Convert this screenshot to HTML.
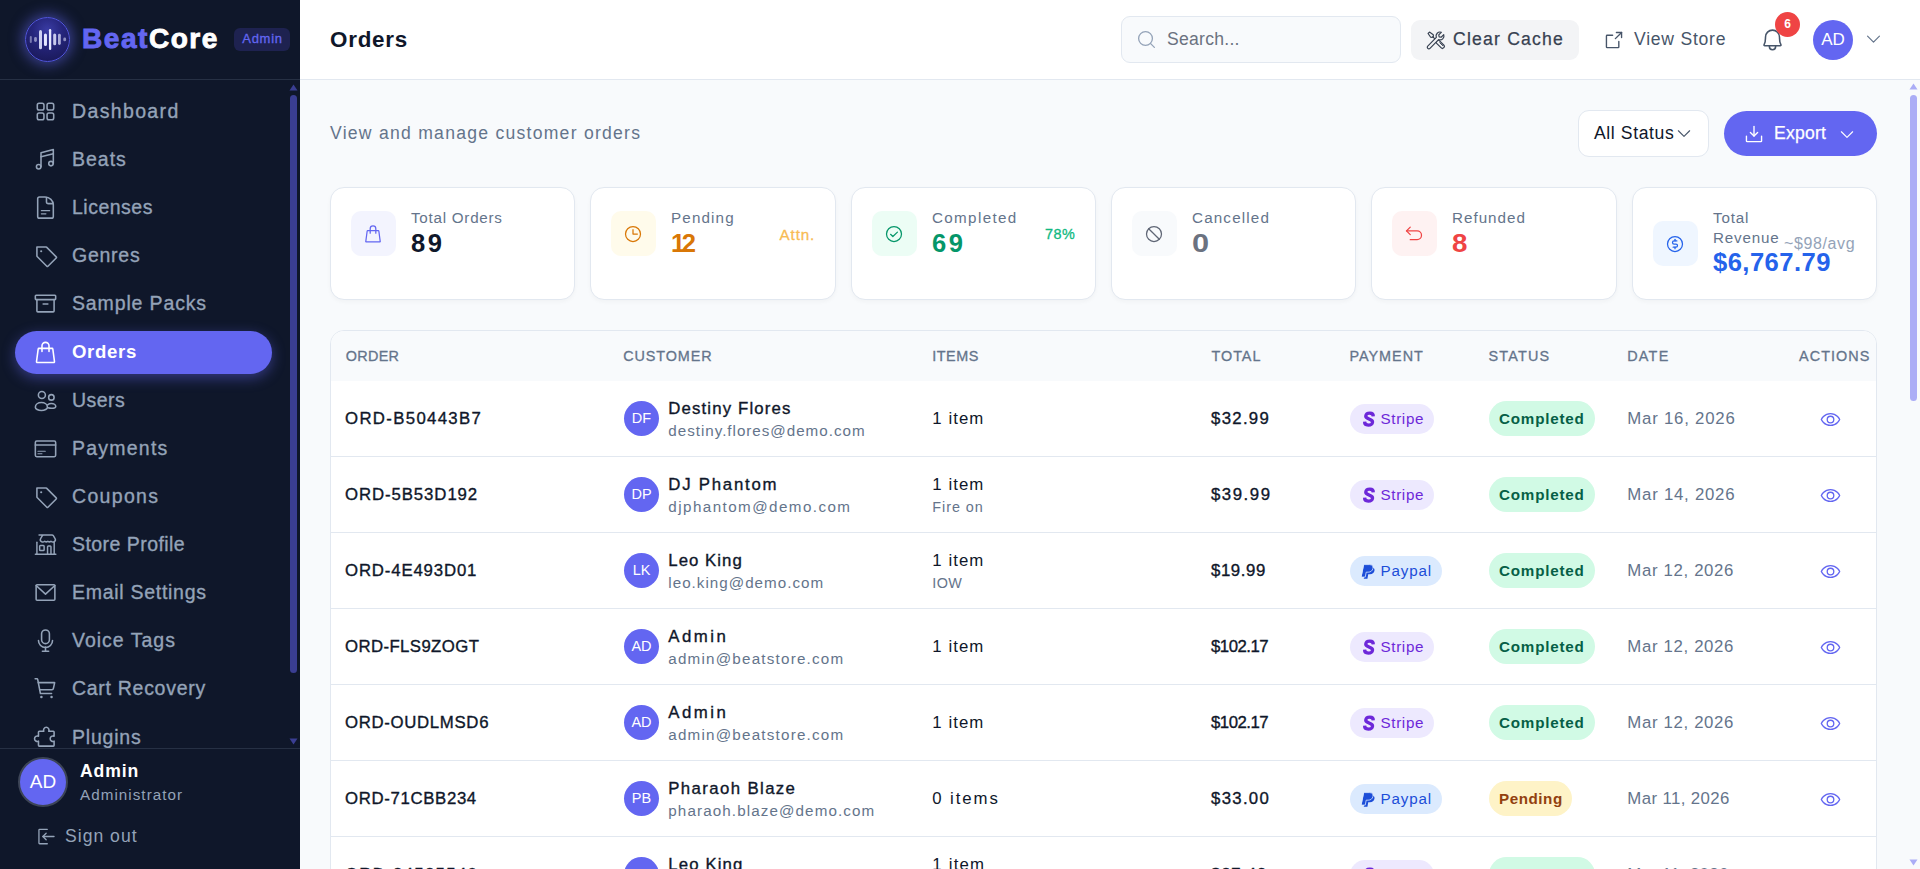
<!DOCTYPE html>
<html lang="en">
<head>
<meta charset="utf-8">
<title>Orders - BeatCore Admin</title>
<style>
*{box-sizing:border-box;margin:0;padding:0}
html,body{width:1920px;height:869px;overflow:hidden;background:#f8fafc}
body{font-family:"Liberation Sans",sans-serif;color:#0f172a;position:relative}
svg.i{display:block;fill:none;stroke:currentColor;stroke-width:16;stroke-linecap:round;stroke-linejoin:round}
.abs{position:absolute}
.t{position:absolute;white-space:nowrap;line-height:1}
.med{-webkit-text-stroke:0.25px currentColor}

/* ---------- sidebar ---------- */
#sb{position:absolute;left:0;top:0;width:300px;height:869px;background:#0f172a;overflow:hidden}
#sb .hd{position:absolute;left:0;top:0;width:300px;height:80px;border-bottom:1px solid #263044}
#logo{position:absolute;left:25px;top:17px;width:45px;height:45px;border-radius:50%;border:1px solid #5256de;background:radial-gradient(circle at 50% 28%,#3a3ca4 0%,#25257c 40%,#17164f 100%);box-shadow:0 0 13px 3px rgba(99,102,241,.5)}
#brand{left:82px;top:25px;font-size:28px;font-weight:700;letter-spacing:1.55px;-webkit-text-stroke:.9px currentColor;color:#6366f1}
#brand b{color:#fff;font-weight:700}
#adm{position:absolute;left:234px;top:28px;width:56px;height:23px;border-radius:6px;background:#1e2250;color:#6366f1;font-size:13px;text-align:center;line-height:22px;letter-spacing:.7px;-webkit-text-stroke:.3px currentColor;padding-left:1px}
.nav{position:absolute;left:15px;width:257px;height:43px;border-radius:22px;color:#94a3b8}
.nav svg{position:absolute;left:18px;top:9px;width:25px;height:25px}
.nav span{position:absolute;left:57px;top:12px;font-size:19.5px;line-height:1;white-space:nowrap;letter-spacing:.9px;-webkit-text-stroke:.35px currentColor}
.nav.on{background:#6366f1;color:#fff;box-shadow:0 4px 14px rgba(99,102,241,.45)}
.nav.on{margin-top:1px}.nav.on svg{top:9px}.nav.on span{top:12px;font-size:18.600px;font-weight:700;letter-spacing:.65px;-webkit-text-stroke:0}
#sbt{position:absolute;left:290px;top:95px;width:7px;height:578px;border-radius:4px;background:#3a3e92}
#sbf{position:absolute;left:0;top:748px;width:300px;height:121px;background:#0f172a;border-top:1px solid #263044}
#sbav{position:absolute;left:18px;top:8px;width:50px;height:50px;border-radius:50%;background:#6366f1;border:2px solid #3d4557;color:#fff;font-size:19px;text-align:center;line-height:46px}

/* ---------- topbar ---------- */
#tb{position:absolute;left:300px;top:0;width:1620px;height:80px;background:#fff;border-bottom:1px solid #e2e8f0}
#search{position:absolute;left:821px;top:16px;width:280px;height:47px;border:1px solid #e2e8f0;border-radius:9px;background:#f8fafc}
#cc{position:absolute;left:1111px;top:20px;width:168px;height:40px;border-radius:9px;background:#f3f4f6}
#badge{position:absolute;left:1475px;top:12px;width:25px;height:25px;border-radius:50%;background:#ef4444;color:#fff;font-size:12px;font-weight:700;text-align:center;line-height:25px}
#av{position:absolute;left:1513px;top:20px;width:40px;height:40px;border-radius:50%;background:#6366f1;color:#fff;font-size:17px;text-align:center;line-height:40px}

/* ---------- main ---------- */
#main{position:absolute;left:300px;top:80px;width:1620px;height:789px;background:#f8fafc;overflow:hidden}
#pst{position:absolute;left:1610px;top:15px;width:7px;height:306px;border-radius:4px;background:#abadf6}
#sel{position:absolute;left:1278px;top:30px;width:131px;height:47px;border:1px solid #e2e8f0;border-radius:11px;background:#fff}
#exp{position:absolute;left:1424px;top:31px;width:153px;height:45px;border-radius:23px;background:#6366f1;color:#fff}
.card{position:absolute;top:107px;width:244.500px;height:113px;background:#fff;border:1px solid #e2e8f0;border-radius:14px;box-shadow:0 2px 4px rgba(15,23,42,.03)}
.card .ib{position:absolute;left:20px;top:23px;width:45px;height:45px;border-radius:10px}
.card .ib svg{position:absolute;left:12.300px;top:12.800px;width:20px;height:20px}
.card .lb{left:80px;top:22px;font-size:15.2px;color:#64748b;letter-spacing:.55px}
.card .vl{left:80px;top:43px;font-size:25.6px;font-weight:700;letter-spacing:.6px}
.card .ex{margin-top:-.5px;font-size:14.4px;letter-spacing:.5px;-webkit-text-stroke:.3px currentColor}

#tbl{position:absolute;left:30px;top:250px;width:1547px;height:700px;background:#fff;border:1px solid #e2e8f0;border-radius:14px;overflow:hidden}
#th{position:absolute;left:0;top:0;width:1547px;height:50px;background:#f8fafc}
#th .t{top:18px;font-size:14.4px;color:#64748b;letter-spacing:1.25px;-webkit-text-stroke:.3px currentColor}
.row{position:absolute;left:0;width:1547px;height:76px;border-bottom:1px solid #e2e8f0}
.row .oid{left:14px;top:30px;font-size:16.8px;letter-spacing:.85px;-webkit-text-stroke:.35px currentColor}
.row .ava{position:absolute;left:293px;top:20px;width:35px;height:35px;border-radius:50%;background:#6366f1;color:#fff;font-size:14.5px;text-align:center;line-height:35px}
.row .nm{left:337.300px;top:20px;font-size:16.8px;letter-spacing:.75px;-webkit-text-stroke:.35px currentColor}
.row .em{left:337.300px;top:42px;font-size:15.2px;color:#64748b;letter-spacing:.62px}
.row .it{left:601.300px;top:30px;font-size:16.8px;letter-spacing:.7px}
.row .it.two{top:20px}
.row .sub{left:601.300px;top:43px;font-size:14.4px;color:#64748b;letter-spacing:.5px}
.row .tot{left:880px;top:30px;font-size:16.8px;letter-spacing:.5px;-webkit-text-stroke:.35px currentColor}
.pay{position:absolute;left:1019px;top:23px;height:30px;border-radius:15px;font-size:15.2px}
.pay.st{width:84px;background:#ede9fe;color:#6d28d9}
.pay.pp{width:92px;background:#dbeafe;color:#1d4ed8}
.pay svg{position:absolute;left:10px;top:6px;width:18px;height:18px}.pay.pp svg{left:9px;top:6.500px;width:17px;height:17px}
.pay .t{left:30.500px;top:7px;letter-spacing:.65px}
.stt{position:absolute;left:1158px;top:20px;height:35px;border-radius:18px;font-size:15.2px;font-weight:700}
.stt.c{width:106px;background:#d1fae5;color:#065f46}
.stt.p{width:83px;background:#fef3c7;color:#92400e}
.stt .t{left:10px;top:10px;letter-spacing:.8px}.stt.p .t{letter-spacing:.55px}
.row .dt{left:1296.300px;top:30px;font-size:16.8px;color:#64748b;letter-spacing:.6px}
.row .eye{position:absolute;left:1489px;top:28px;width:21px;height:21px;color:#6366f1}
</style>
</head>
<body>
<div id="sb">
<div class="nav" style="top:89.6px"><svg class="i" viewBox="0 0 256 256"><rect x="44" y="44" width="68" height="68" rx="18"/><rect x="144" y="44" width="68" height="68" rx="18"/><rect x="44" y="144" width="68" height="68" rx="18"/><rect x="144" y="144" width="68" height="68" rx="18"/></svg><span style="letter-spacing:1.36px">Dashboard</span></div>
<div class="nav" style="top:137.8px"><svg class="i" viewBox="0 0 256 256"><circle cx="184" cy="170" r="23"/><circle cx="58" cy="202" r="23"/><path d="M208 68 82 100"/><path d="M82 202V58l126-32v144"/></svg><span style="letter-spacing:1.0px">Beats</span></div>
<div class="nav" style="top:185.9px"><svg class="i" viewBox="0 0 256 256"><path d="M66 21h58c46 0 84 36 84 80v118a18 18 0 0 1-18 18H66a18 18 0 0 1-18-18V39a18 18 0 0 1 18-18Z"/><path d="M138 26v42a20 20 0 0 0 20 20h44"/><path d="M86 160h84" stroke-width="13"/><path d="M86 193h46" stroke-width="13"/></svg><span style="letter-spacing:0.49px">Licenses</span></div>
<div class="nav" style="top:234.0px"><svg class="i" viewBox="0 0 256 256"><path d="M42.3 138.3A8 8 0 0 1 40 132.7V40h92.7a8 8 0 0 1 5.6 2.3l99.4 99.4a8 8 0 0 1 0 11.3L153 237.7a8 8 0 0 1-11.3 0Z"/><circle cx="84" cy="84" r="11" fill="currentColor" stroke="none"/></svg><span style="letter-spacing:0.74px">Genres</span></div>
<div class="nav" style="top:282.2px"><svg class="i" viewBox="0 0 256 256"><rect x="24" y="44" width="208" height="44" rx="8"/><path d="M216 88v116a10 10 0 0 1-10 10H50a10 10 0 0 1-10-10V88"/><path d="M104 134h48"/></svg><span style="letter-spacing:0.86px">Sample Packs</span></div>
<div class="nav on" style="top:330.4px"><svg class="i" viewBox="0 0 256 256"><path d="M44 230a8 8 0 0 1-8-9.400l17-128a8 8 0 0 1 8-6.600h134a8 8 0 0 1 8 6.600l17 128a8 8 0 0 1-8 9.400Z"/><path d="M92 118V60a36 36 0 0 1 72 0v58"/></svg><span>Orders</span></div>
<div class="nav" style="top:378.5px"><svg class="i" viewBox="0 0 256 256"><circle cx="91" cy="72" r="36"/><path d="M24 196c0-28 28-48 62-48s62 20 62 48c0 18-28 34-62 34s-62-16-62-34Z"/><circle cx="188" cy="96" r="28"/><path d="M150 172c10-8 24-13 38-13 26 0 45 14 45 30 0 10-20 18-45 18-12 0-24-2-34-5"/></svg><span style="letter-spacing:0.43px">Users</span></div>
<div class="nav" style="top:426.6px"><svg class="i" viewBox="0 0 256 256"><rect x="24" y="52" width="208" height="160" rx="14"/><path d="M24 93h208"/><path d="M50 156h76" stroke-width="11"/><path d="M50 181h42" stroke-width="11"/></svg><span style="letter-spacing:1.23px">Payments</span></div>
<div class="nav" style="top:474.8px"><svg class="i" viewBox="0 0 256 256"><path d="M42.3 138.3A8 8 0 0 1 40 132.7V40h92.7a8 8 0 0 1 5.6 2.3l99.4 99.4a8 8 0 0 1 0 11.3L153 237.7a8 8 0 0 1-11.3 0Z"/><circle cx="84" cy="84" r="11" fill="currentColor" stroke="none"/></svg><span style="letter-spacing:1.33px">Coupons</span></div>
<div class="nav" style="top:522.9px"><svg class="i" viewBox="0 0 256 256"><g stroke-width="15"><path d="M62 30h132a16 16 0 0 1 14 8l18 30a22 22 0 0 1-8 30q-18 10-34-4q-16 14-32 0q-16 14-32 0q-16 14-34 4a22 22 0 0 1-8-30l18-30a16 16 0 0 1 14-8Z"/><path d="M40 104v120"/><path d="M217 104v120"/><path d="M24 227h210"/><rect x="68" y="139" width="46" height="50" rx="8"/><path d="M149 224v-73a8 8 0 0 1 8-8h19a8 8 0 0 1 8 8v73"/></g></svg><span style="letter-spacing:0.45px">Store Profile</span></div>
<div class="nav" style="top:571.1px"><svg class="i" viewBox="0 0 256 256"><rect x="32" y="48" width="192" height="160" rx="10"/><path d="M224 56l-96 88-96-88"/></svg><span style="letter-spacing:0.72px">Email Settings</span></div>
<div class="nav" style="top:619.2px"><svg class="i" viewBox="0 0 256 256"><rect x="88" y="20" width="80" height="140" rx="40"/><path d="M128 196v40"/><path d="M96 238h64"/><path d="M200 128a72 72 0 0 1-144 0"/></svg><span style="letter-spacing:1.0px">Voice Tags</span></div>
<div class="nav" style="top:667.4px"><svg class="i" viewBox="0 0 256 256"><path d="M190 180H76L48 34a8 8 0 0 0-8-6H22"/><circle cx="86" cy="216" r="13" fill="currentColor" stroke="none"/><circle cx="190" cy="216" r="13" fill="currentColor" stroke="none"/><path d="M68 140h126a16 16 0 0 0 15-13l13-59H54"/></svg><span style="letter-spacing:0.71px">Cart Recovery</span></div>
<div class="nav" style="top:715.5px"><svg class="i" viewBox="0 0 256 256"><path d="M64 216a8 8 0 0 1-8-8v-42.800a28 28 0 1 1 0-50.400V72a8 8 0 0 1 8-8h46.800a28 28 0 1 1 50.400 0H208a8 8 0 0 1 8 8v42.800a28 28 0 1 0 0 50.400V208a8 8 0 0 1-8 8Z"/></svg><span style="letter-spacing:0.8px">Plugins</span></div>
<div id="sbt"></div>
<svg class="abs" style="left:289px;top:84px" width="9" height="7"><path d="M4.500 0.500 8.500 6.500H0.500Z" fill="#3a3e92"/></svg>
<svg class="abs" style="left:289px;top:738px" width="9" height="7"><path d="M0.500 0.500H8.500L4.500 6.500Z" fill="#3a3e92"/></svg>
<div class="hd" style="background:#0f172a">
<div id="logo"><svg width="43" height="43" viewBox="0 0 43 43" style="display:block"><g stroke="#e5e7ff" stroke-linecap="round" fill="none"><path d="M4.80 19.00V23.90" stroke-width="2.0" opacity="0.45"/><path d="M9.50 20.50V22.50" stroke-width="2.8" opacity="0.55"/><path d="M14.50 13.50V29.70" stroke-width="3.0" opacity="0.88"/><path d="M19.45 17.10V26.60" stroke-width="3.0" opacity="1"/><path d="M24.10 12.15V30.95" stroke-width="2.3" opacity="1"/><path d="M28.70 17.10V25.80" stroke-width="3.0" opacity="0.85"/><path d="M33.40 17.20V25.50" stroke-width="2.8" opacity="0.7"/><path d="M38.70 21.00V21.90" stroke-width="2.8" opacity="0.55"/></g></svg></div>
<div id="brand" class="t">Beat<b>Core</b></div>
<div id="adm">Admin</div>
</div>
<div id="sbf">
<div id="sbav">AD</div>
<div class="t" style="left:80px;top:14px;font-size:17.6px;font-weight:700;color:#fff;letter-spacing:.9px">Admin</div>
<div class="t" style="left:80px;top:38px;font-size:15.2px;color:#94a3b8;letter-spacing:1.05px">Administrator</div>
<svg class="i abs" style="left:35px;top:77px;width:21px;height:21px;color:#94a3b8" viewBox="0 0 256 256"><path d="M150 216H56a8 8 0 0 1-8-8V48a8 8 0 0 1 8-8h94"/><path d="M136 88 96 128l40 40"/><path d="M96 128h136"/></svg>
<div class="t" style="left:65px;top:79px;font-size:17.6px;color:#94a3b8;letter-spacing:1px">Sign out</div>
</div>
</div>

<div id="tb">
<div class="t" style="left:30px;top:29px;font-size:22.4px;font-weight:700;letter-spacing:.75px;color:#0f172a">Orders</div>
<div id="search"><svg class="i abs" style="left:14px;top:12px;width:21px;height:21px;color:#94a3b8" viewBox="0 0 256 256"><circle cx="116" cy="116" r="84"/><path d="M175.400 175.400 224 224"/></svg>
<div class="t" style="left:45px;top:14px;font-size:17.6px;color:#6b7280;letter-spacing:.25px">Search...</div></div>
<div id="cc"><svg class="i abs" style="left:14px;top:9px;width:22px;height:22px;color:#374151" viewBox="0 0 256 256"><g stroke-width="14"><path d="M36 52l16-16 44 30 2 18-14 14-18-2Z"/><path d="M92 92l34 34"/><rect x="122" y="156" width="112" height="44" rx="18" transform="rotate(45 178 178)"/><path d="M172 160l34 34" stroke-width="11"/><path d="M158 124 58 226a18 18 0 0 1-26-26L132 98a46 46 0 0 1 58-60l-30 30 5 23 23 5 30-30a46 46 0 0 1-60 58Z" fill="#f3f4f6"/></g></svg>
<div class="t med" style="left:42px;top:11px;font-size:17.6px;color:#374151;letter-spacing:1.2px">Clear Cache</div></div>
<svg class="i abs" style="left:1303px;top:29px;width:22px;height:22px;color:#475569" viewBox="0 0 256 256"><path d="M216 100V40h-60"/><path d="M144 112l72-72"/><path d="M184 144v64a8 8 0 0 1-8 8H48a8 8 0 0 1-8-8V80a8 8 0 0 1 8-8h64"/></svg>
<div class="t" style="left:1334px;top:31px;font-size:17.6px;color:#475569;letter-spacing:.75px">View Store</div>
<svg class="i abs" style="left:1460px;top:26.500px;width:25px;height:25px;color:#475569" viewBox="0 0 256 256"><path d="M56.200 104a71.900 71.900 0 0 1 72.300-72c39.600.3 71.300 33.200 71.300 72.900V112c0 35.800 7.500 56.600 14.100 68a8 8 0 0 1-6.900 12H49a8 8 0 0 1-6.900-12c6.600-11.400 14.100-32.200 14.100-68Z"/><path d="M96 192v8a32 32 0 0 0 64 0v-8"/></svg>
<div id="badge">6</div>
<div id="av">AD</div>
<svg class="i abs" style="left:1564px;top:29px;width:19px;height:19px;color:#64748b" viewBox="0 0 256 256"><path d="M208 96l-80 80-80-80"/></svg>
</div>

<div id="main">
<div class="t" style="left:30px;top:45px;font-size:17.6px;color:#64748b;letter-spacing:1.25px">View and manage customer orders</div>
<div id="sel"><div class="t" style="left:15px;top:14px;font-size:17.6px;color:#0f172a;letter-spacing:.6px">All Status</div>
<svg class="i abs" style="left:96px;top:13px;width:18px;height:18px;color:#475569" viewBox="0 0 256 256"><path d="M208 96l-80 80-80-80"/></svg></div>
<div id="exp"><svg class="i abs" style="left:19px;top:12px;width:22px;height:22px" viewBox="0 0 256 256"><path d="M86 110l42 42 42-42"/><path d="M128 40v112"/><path d="M216 152v56a8 8 0 0 1-8 8H48a8 8 0 0 1-8-8v-56"/></svg>
<div class="t med" style="left:50px;top:14px;font-size:17.6px;letter-spacing:.2px">Export</div>
<svg class="i abs" style="left:114px;top:14px;width:18px;height:18px" viewBox="0 0 256 256"><path d="M208 96l-80 80-80-80"/></svg></div>
<div class="card" style="left:30px;width:245px"><div class="ib" style="background:#f3f4fe;color:#6366f1"><svg class="i" viewBox="0 0 256 256"><path d="M44 230a8 8 0 0 1-8-9.400l17-128a8 8 0 0 1 8-6.600h134a8 8 0 0 1 8 6.600l17 128a8 8 0 0 1-8 9.400Z"/><path d="M92 118V60a36 36 0 0 1 72 0v58"/></svg></div><div class="t lb" style="letter-spacing:.75px">Total Orders</div><div class="t vl" style="color:#0f172a;letter-spacing:2.5px">89</div></div>
<div class="card" style="left:290px;width:246px"><div class="ib" style="background:#fffbeb;color:#d97706"><svg class="i" viewBox="0 0 256 256"><circle cx="128" cy="128" r="96"/><path d="M128 72v56h56"/></svg></div><div class="t lb" style="letter-spacing:1.15px">Pending</div><div class="t vl" style="color:#d97706;letter-spacing:-3.6px">12</div><div class="t ex" style="left:188.500px;top:39px;color:#f8bb54;font-size:15.2px;letter-spacing:.9px">Attn.</div></div>
<div class="card" style="left:551px;width:245px"><div class="ib" style="background:#ecfdf5;color:#059669"><svg class="i" viewBox="0 0 256 256"><circle cx="128" cy="128" r="96"/><path d="M172 104l-58.700 56L84 132"/></svg></div><div class="t lb" style="letter-spacing:1.35px">Completed</div><div class="t vl" style="color:#059669;letter-spacing:2.4px">69</div><div class="t ex" style="left:193px;top:39px;color:#10b981">78%</div></div>
<div class="card" style="left:811px;width:245px"><div class="ib" style="background:#f8fafc;color:#5f6675"><svg class="i" viewBox="0 0 256 256"><circle cx="128" cy="128" r="96"/><path d="M60.100 60.100l135.800 135.800"/></svg></div><div class="t lb" style="letter-spacing:1.17px">Cancelled</div><div class="t vl" style="color:#6b7280;transform:scaleX(1.2);transform-origin:0 0">0</div></div>
<div class="card" style="left:1071px;width:246px"><div class="ib" style="background:#fef2f2;color:#ef4444"><svg class="i" viewBox="0 0 256 256"><path d="M80 136 32 88l48-48"/><path d="M80 200h88a56 56 0 0 0 0-112H32"/></svg></div><div class="t lb" style="letter-spacing:1px">Refunded</div><div class="t vl" style="color:#ef4444;transform:scaleX(1.08);transform-origin:0 0">8</div></div>
<div class="card" style="left:1332px;width:245px"><div class="ib" style="top:33px;background:#eff6ff;color:#2563eb"><svg class="i" viewBox="0 0 256 256"><circle cx="128" cy="128" r="96"/><path d="M128 68v20"/><path d="M128 168v20"/><path d="M104 168h36a20 20 0 0 0 0-40h-24a20 20 0 0 1 0-40h36"/></svg></div><div class="t lb" style="letter-spacing:.8px">Total</div><div class="t lb" style="top:42px;letter-spacing:.83px">Revenue</div><div class="t" style="left:151px;top:48px;font-size:16px;color:#94a3b8;letter-spacing:.62px">~$98/avg</div><div class="t vl" style="top:62px;color:#2563eb;letter-spacing:.45px">$6,767.79</div></div>
<!--TBL-S--><div id="tbl"><div id="th"><div class="t" id="hORDER" style="left:14.7px;letter-spacing:0.33px">ORDER</div><div class="t" id="hCUSTOMER" style="left:292.3px;letter-spacing:0.88px">CUSTOMER</div><div class="t" id="hITEMS" style="left:601.3px;letter-spacing:0.5px">ITEMS</div><div class="t" id="hTOTAL" style="left:880.5px;letter-spacing:0.97px">TOTAL</div><div class="t" id="hPAYMENT" style="left:1018.4px;letter-spacing:1.01px">PAYMENT</div><div class="t" id="hSTATUS" style="left:1157.6px;letter-spacing:1.17px">STATUS</div><div class="t" id="hDATE" style="left:1296.2px;letter-spacing:1.25px">DATE</div><div class="t" id="hACTIONS" style="left:1468px;letter-spacing:1.08px">ACTIONS</div></div>
<div class="row" style="top:50px"><div class="t oid" id="r1oid" style="letter-spacing:1.33px">ORD-B50443B7</div><div class="ava">DF</div><div class="t nm" id="r1nm" style="letter-spacing:1.14px">Destiny Flores</div><div class="t em" id="r1em" style="letter-spacing:0.98px">destiny.flores@demo.com</div><div class="t it" id="r1it" style="letter-spacing:1.06px">1 item</div><div class="t tot" id="r1tot" style="letter-spacing:1.3px">$32.99</div><div class="pay st"><svg class="i" viewBox="0 0 256 256"><g transform="skewX(-7) translate(16 0)"><path d="M184 92c-2-30-24-46-56-46-30 0-52 15-52 40 0 50 108 32 108 88 0 26-24 40-54 40-34 0-58-18-60-48" stroke-width="46" stroke-linecap="butt"/></g></svg><div class="t">Stripe</div></div><div class="stt c"><div class="t">Completed</div></div><div class="t dt" id="r1dt" style="letter-spacing:0.78px">Mar 16, 2026</div><svg class="i eye" viewBox="0 0 256 256"><path d="M128 56C48 56 16 128 16 128s32 72 112 72 112-72 112-72-32-72-112-72Z"/><circle cx="128" cy="128" r="40"/></svg></div>
<div class="row" style="top:126px"><div class="t oid" id="r2oid" style="letter-spacing:0.91px">ORD-5B53D192</div><div class="ava">DP</div><div class="t nm" id="r2nm" style="letter-spacing:1.77px">DJ Phantom</div><div class="t em" id="r2em" style="letter-spacing:1.44px">djphantom@demo.com</div><div class="t it two" id="r2it" style="letter-spacing:1.06px">1 item</div><div class="t sub" id="r2sub" style="letter-spacing:0.94px">Fire on</div><div class="t tot" id="r2tot" style="letter-spacing:1.54px">$39.99</div><div class="pay st"><svg class="i" viewBox="0 0 256 256"><g transform="skewX(-7) translate(16 0)"><path d="M184 92c-2-30-24-46-56-46-30 0-52 15-52 40 0 50 108 32 108 88 0 26-24 40-54 40-34 0-58-18-60-48" stroke-width="46" stroke-linecap="butt"/></g></svg><div class="t">Stripe</div></div><div class="stt c"><div class="t">Completed</div></div><div class="t dt" id="r2dt" style="letter-spacing:0.76px">Mar 14, 2026</div><svg class="i eye" viewBox="0 0 256 256"><path d="M128 56C48 56 16 128 16 128s32 72 112 72 112-72 112-72-32-72-112-72Z"/><circle cx="128" cy="128" r="40"/></svg></div>
<div class="row" style="top:202px"><div class="t oid" id="r3oid" style="letter-spacing:0.84px">ORD-4E493D01</div><div class="ava">LK</div><div class="t nm" id="r3nm" style="letter-spacing:1.04px">Leo King</div><div class="t em" id="r3em" style="letter-spacing:1.01px">leo.king@demo.com</div><div class="t it two" id="r3it" style="letter-spacing:1.06px">1 item</div><div class="t sub" id="r3sub" style="letter-spacing:0.4px">IOW</div><div class="t tot" id="r3tot" style="letter-spacing:0.58px">$19.99</div><div class="pay pp"><svg class="i" viewBox="0 0 256 256"><path d="M104 64h82c36 0 54 22 47 54-7 34-32 52-68 52h-26l-12 66H72Z" fill="currentColor" stroke="none"/><path d="M76 24h84c38 0 58 24 50 58-8 36-34 56-72 56h-30l-14 74H38Z" fill="currentColor" stroke="#dbeafe" stroke-width="12"/></svg><div class="t" style="letter-spacing:.85px">Paypal</div></div><div class="stt c"><div class="t">Completed</div></div><div class="t dt" id="r3dt" style="letter-spacing:0.66px">Mar 12, 2026</div><svg class="i eye" viewBox="0 0 256 256"><path d="M128 56C48 56 16 128 16 128s32 72 112 72 112-72 112-72-32-72-112-72Z"/><circle cx="128" cy="128" r="40"/></svg></div>
<div class="row" style="top:278px"><div class="t oid" id="r4oid" style="letter-spacing:0.39px">ORD-FLS9ZOGT</div><div class="ava">AD</div><div class="t nm" id="r4nm" style="letter-spacing:2.5px">Admin</div><div class="t em" id="r4em" style="letter-spacing:1.21px">admin@beatstore.com</div><div class="t it" id="r4it" style="letter-spacing:1.06px">1 item</div><div class="t tot" id="r4tot" style="letter-spacing:-0.5px">$102.17</div><div class="pay st"><svg class="i" viewBox="0 0 256 256"><g transform="skewX(-7) translate(16 0)"><path d="M184 92c-2-30-24-46-56-46-30 0-52 15-52 40 0 50 108 32 108 88 0 26-24 40-54 40-34 0-58-18-60-48" stroke-width="46" stroke-linecap="butt"/></g></svg><div class="t">Stripe</div></div><div class="stt c"><div class="t">Completed</div></div><div class="t dt" id="r4dt" style="letter-spacing:0.66px">Mar 12, 2026</div><svg class="i eye" viewBox="0 0 256 256"><path d="M128 56C48 56 16 128 16 128s32 72 112 72 112-72 112-72-32-72-112-72Z"/><circle cx="128" cy="128" r="40"/></svg></div>
<div class="row" style="top:354px"><div class="t oid" id="r5oid" style="letter-spacing:0.67px">ORD-OUDLMSD6</div><div class="ava">AD</div><div class="t nm" id="r5nm" style="letter-spacing:2.5px">Admin</div><div class="t em" id="r5em" style="letter-spacing:1.21px">admin@beatstore.com</div><div class="t it" id="r5it" style="letter-spacing:1.06px">1 item</div><div class="t tot" id="r5tot" style="letter-spacing:-0.5px">$102.17</div><div class="pay st"><svg class="i" viewBox="0 0 256 256"><g transform="skewX(-7) translate(16 0)"><path d="M184 92c-2-30-24-46-56-46-30 0-52 15-52 40 0 50 108 32 108 88 0 26-24 40-54 40-34 0-58-18-60-48" stroke-width="46" stroke-linecap="butt"/></g></svg><div class="t">Stripe</div></div><div class="stt c"><div class="t">Completed</div></div><div class="t dt" id="r5dt" style="letter-spacing:0.66px">Mar 12, 2026</div><svg class="i eye" viewBox="0 0 256 256"><path d="M128 56C48 56 16 128 16 128s32 72 112 72 112-72 112-72-32-72-112-72Z"/><circle cx="128" cy="128" r="40"/></svg></div>
<div class="row" style="top:430px"><div class="t oid" id="r6oid" style="letter-spacing:0.65px">ORD-71CBB234</div><div class="ava">PB</div><div class="t nm" id="r6nm" style="letter-spacing:1.38px">Pharaoh Blaze</div><div class="t em" id="r6em" style="letter-spacing:1.11px">pharaoh.blaze@demo.com</div><div class="t it" id="r6it" style="letter-spacing:1.9px">0 items</div><div class="t tot" id="r6tot" style="letter-spacing:1.3px">$33.00</div><div class="pay pp"><svg class="i" viewBox="0 0 256 256"><path d="M104 64h82c36 0 54 22 47 54-7 34-32 52-68 52h-26l-12 66H72Z" fill="currentColor" stroke="none"/><path d="M76 24h84c38 0 58 24 50 58-8 36-34 56-72 56h-30l-14 74H38Z" fill="currentColor" stroke="#dbeafe" stroke-width="12"/></svg><div class="t" style="letter-spacing:.85px">Paypal</div></div><div class="stt p"><div class="t">Pending</div></div><div class="t dt" id="r6dt" style="letter-spacing:0.4px">Mar 11, 2026</div><svg class="i eye" viewBox="0 0 256 256"><path d="M128 56C48 56 16 128 16 128s32 72 112 72 112-72 112-72-32-72-112-72Z"/><circle cx="128" cy="128" r="40"/></svg></div>
<div class="row" style="top:506px"><div class="t oid" id="r7oid" style="letter-spacing:1.3px">ORD-84525540</div><div class="ava">LK</div><div class="t nm" id="r7nm" style="letter-spacing:1.11px">Leo King</div><div class="t em" id="r7em" style="letter-spacing:1.05px">leo.king@demo.com</div><div class="t it two" id="r7it" style="letter-spacing:1.22px">1 item</div><div class="t sub" id="r7sub" style="letter-spacing:0.6px">Night drive</div><div class="t tot" id="r7tot" style="letter-spacing:0.8px">$27.49</div><div class="pay st"><svg class="i" viewBox="0 0 256 256"><g transform="skewX(-7) translate(16 0)"><path d="M184 92c-2-30-24-46-56-46-30 0-52 15-52 40 0 50 108 32 108 88 0 26-24 40-54 40-34 0-58-18-60-48" stroke-width="46" stroke-linecap="butt"/></g></svg><div class="t">Stripe</div></div><div class="stt c"><div class="t">Completed</div></div><div class="t dt" id="r7dt" style="letter-spacing:0.29px">Mar 11, 2026</div><svg class="i eye" viewBox="0 0 256 256"><path d="M128 56C48 56 16 128 16 128s32 72 112 72 112-72 112-72-32-72-112-72Z"/><circle cx="128" cy="128" r="40"/></svg></div>
</div>
<!--TBL-E-->
<div id="pst"></div>
<svg class="abs" style="left:1609px;top:3.300px" width="9" height="7"><path d="M4.500 0.500 8.500 6.500H0.500Z" fill="#abadf6"/></svg>
<svg class="abs" style="left:1609px;top:779px" width="9" height="7"><path d="M0.500 0.500H8.500L4.500 6.500Z" fill="#abadf6"/></svg>
</div>

</body>
</html>
